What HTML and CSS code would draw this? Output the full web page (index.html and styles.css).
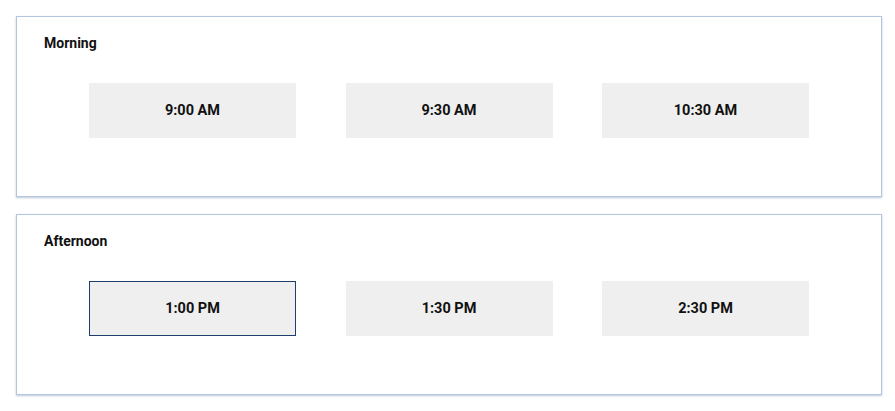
FILE: index.html
```html
<!DOCTYPE html>
<html lang="en">
<head>
<meta charset="utf-8">
<title>Time slots</title>
<link rel="stylesheet" href="styles.css">
</head>
<body>
<main class="slots">
  <section class="card">
    <h2 class="card-title">Morning</h2>
    <div class="times">
      <button class="time">9:00 AM</button>
      <button class="time">9:30 AM</button>
      <button class="time">10:30 AM</button>
    </div>
  </section>
  <section class="card">
    <h2 class="card-title">Afternoon</h2>
    <div class="times">
      <button class="time time-selected">1:00 PM</button>
      <button class="time">1:30 PM</button>
      <button class="time">2:30 PM</button>
    </div>
  </section>
</main>
</body>
</html>
```

FILE: styles.css
```css
* { box-sizing: border-box; }
html, body { margin: 0; background: #ffffff; }
body {
  font-family: Roboto, "Liberation Sans", Arial, sans-serif;
  color: #111111;
  padding: 16px 13px 16px 16px;
}
.slots {
  display: flex;
  flex-direction: column;
  gap: 17px;
}
.card {
  height: 181px;
  border: 1px solid #b3c6df;
  box-shadow: 0 1px 2px rgba(70, 100, 150, 0.35);
  padding: 18px 27px 0 27px;
}
.card-title {
  margin: 0;
  font-size: 14px;
  line-height: 16px;
  font-weight: 700;
}
.times {
  margin-top: 32px;
  display: flex;
  justify-content: center;
  gap: 49.5px;
}
.time {
  width: 207px;
  height: 55px;
  border: 1px solid #efefef;
  background: #efefef;
  font-family: inherit;
  font-size: 14.5px;
  font-weight: 700;
  color: #111111;
  padding: 0;
}
.time-selected {
  border-color: #1d3f6e;
}
```
